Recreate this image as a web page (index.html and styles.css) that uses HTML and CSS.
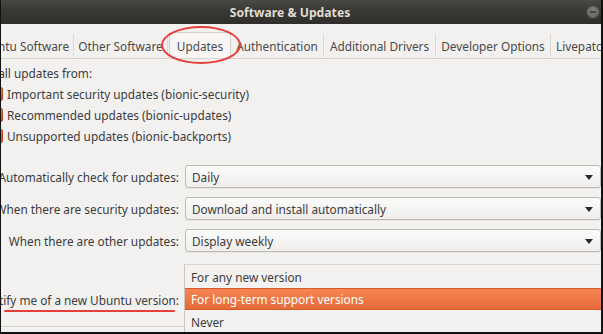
FILE: index.html
```html
<!DOCTYPE html>
<html>
<head>
<meta charset="utf-8">
<link rel="stylesheet" href="styles.css">
</head>
<body>
<div class="window">
  <div class="titlebar">
    <span class="title">Software &amp; Updates</span>
    <span class="min-btn"></span>
  </div>
  <div class="tabs">
    <div class="tab t1">Ubuntu Software</div>
    <div class="tab t2">Other Software</div>
    <div class="tab t3 active">Updates</div>
    <div class="tab t4">Authentication</div>
    <div class="tab t5">Additional Drivers</div>
    <div class="tab t6">Developer Options</div>
    <div class="tab t7">Livepatch</div>
    <span class="circle"></span>
  </div>
  <div class="content">
    <div class="section-title">Install updates from:</div>
    <div class="check"><span class="box"></span>Important security updates (bionic-security)</div>
    <div class="check"><span class="box"></span>Recommended updates (bionic-updates)</div>
    <div class="check"><span class="box"></span>Unsupported updates (bionic-backports)</div>
    <div class="rows">
      <div class="row"><span class="label">Automatically check for updates:</span><div class="combo">Daily<span class="arrow"></span></div></div>
      <div class="row"><span class="label">When there are security updates:</span><div class="combo">Download and install automatically<span class="arrow"></span></div></div>
      <div class="row"><span class="label">When there are other updates:</span><div class="combo">Display weekly<span class="arrow"></span></div></div>
      <div class="row notify"><span class="label underline">Notify me of a new Ubuntu version:</span>
        <div class="menu">
          <div class="item">For any new version</div>
          <div class="item hl">For long-term support versions</div>
          <div class="item last">Never</div>
        </div>
      </div>
    </div>
  </div>
</div>
</body>
</html>
```
FILE: styles.css
```css
html, body {
  margin: 0;
  padding: 0;
  width: 603px;
  height: 334px;
  overflow: hidden;
  background: #111;
}
.window {
  width: 600px;
  height: 332px;
  margin-left: 1px;
  background: #f2f1f0;
  display: flex;
  flex-direction: column;
  overflow: hidden;
  position: relative;
  font-family: "Noto Sans", sans-serif;
  font-size: 11.8px;
  color: #3c3c3c;
}
.titlebar {
  height: 24px;
  flex: none;
  background: linear-gradient(#4a4945, #3a3935 40%, #2f2e2b);
  display: flex;
  align-items: center;
  justify-content: center;
  position: relative;
}
.title {
  color: #dfdbd2;
  font-weight: bold;
  font-size: 12.2px;
  margin-left: -22px;
}
.min-btn {
  position: absolute;
  right: 1px;
  top: 5px;
  width: 14px;
  height: 14px;
  border-radius: 50%;
  background: radial-gradient(circle at 50% 40%, #807f7b, #5b5a56);
  box-shadow: inset 0 0 0 1px #3a3935;
}
.min-btn::after {
  content: "";
  position: absolute;
  left: 4px;
  right: 4px;
  top: 6px;
  height: 2px;
  background: #46453f;
}
.tabs {
  height: 34px;
  flex: none;
  display: flex;
  align-items: flex-end;
  border-bottom: 1px solid #d6d3cf;
  margin-left: -30px;
  position: relative;
}
.tab {
  height: 23px;
  margin-bottom: 1px;
  display: flex;
  align-items: center;
  justify-content: center;
  border-right: 1px solid #dcd9d5;
  flex: none;
  white-space: nowrap;
  color: #4a4a4a;
}
.t1 { width: 102px; }
.t2 { width: 93px; }
.t3 { width: 60px; }
.t4 { width: 92px; }
.t5 { width: 111px; }
.t6 { width: 114px; }
.t7 { width: 80px; justify-content: flex-start; padding-left: 5px; border-right: none; }
.tab.active {
  background: #f7f6f5;
  border: 1px solid #d3d0cc;
  border-bottom: none;
  height: 25px;
  margin-bottom: 0;
  margin-left: 1px;
  border-radius: 2px 2px 0 0;
}
.circle {
  position: absolute;
  left: 190px;
  top: 2px;
  width: 76px;
  height: 34px;
  border: 2px solid #e3403c;
  border-radius: 50%;
}
.content {
  display: flex;
  flex-direction: column;
  margin-left: -17px;
  height: 267px;
  flex: none;
  border-bottom: 1px solid #d4d1cd;
}
.section-title {
  margin-top: 5px;
  height: 19px;
  line-height: 19px;
  padding-left: 2px;
  margin-left: -9px;
}
.check {
  height: 21px;
  display: flex;
  align-items: center;
  white-space: nowrap;
}
.box {
  width: 12px;
  height: 12px;
  border-radius: 2px;
  background: linear-gradient(#f0754a, #d9521e);
  border: 1px solid #b9451b;
  margin-right: 4px;
  margin-left: 5px;
  flex: none;
}
.rows {
  margin-top: 19px;
  display: flex;
  flex-direction: column;
  gap: 9px;
  margin-left: 17px;
}
.row {
  display: flex;
  align-items: center;
  height: 23px;
}
.label {
  width: 178px;
  flex: none;
  white-space: nowrap;
  display: flex;
  justify-content: flex-end;
}
.combo {
  margin-left: 6px;
  flex: 1;
  height: 21px;
  border: 1px solid #bdbab5;
  border-radius: 3px;
  background: linear-gradient(#fbfbfa, #efeeec);
  display: flex;
  align-items: center;
  padding-left: 6px;
  position: relative;
  box-shadow: 0 1px 0 rgba(0,0,0,0.05);
}
.arrow {
  position: absolute;
  right: 7px;
  top: 9px;
  width: 0;
  height: 0;
  border-left: 4px solid transparent;
  border-right: 4px solid transparent;
  border-top: 5px solid #2a2a2a;
}
.notify {
  margin-top: 4px;
  height: 60px;
  align-items: flex-start;
  position: relative;
}
.notify .label {
  margin-top: 27px;
}
.underline {
  position: relative;
}
.underline::after {
  content: "";
  position: absolute;
  left: 3px;
  right: 4px;
  bottom: -4px;
  height: 2px;
  background: #e3403c;
  border-radius: 1px;
}
.menu {
  position: absolute;
  left: 183px;
  top: -1px;
  width: 420px;
  height: 80px;
  background: #f3f2f1;
  border-left: 1px solid #c9c6c2;
  border-top: 1px solid #d9d6d2;
  padding-top: 1px;
}
.item {
  height: 22px;
  line-height: 22px;
  padding-left: 6px;
  white-space: nowrap;
}
.item.hl {
  background: linear-gradient(#f58656, #e56a37);
  border-top: 1px solid #d8582a;
  border-bottom: 1px solid #d8582a;
  color: #fff;
  height: 20px;
  line-height: 20px;
}
.item.last {
  line-height: 24px;
  height: 24px;
}
```
